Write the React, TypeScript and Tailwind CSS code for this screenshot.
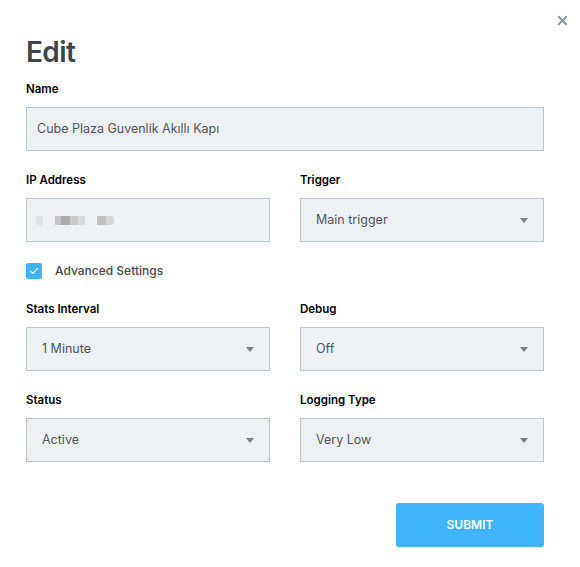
import { X } from "lucide-react";

function Label({ children }: { children: React.ReactNode }) {
  return <div className="mb-[10px] h-4 text-[11.5px] leading-4 font-semibold text-black">{children}</div>;
}

function Select({ value }: { value: string }) {
  return (
    <div className="flex h-[44px] items-center justify-between border border-[#b9c7d0] bg-[#edf1f4] pl-[15px] pr-[15px] text-[12.5px] text-[#50555b]">
      <span>{value}</span>
      <span className="h-0 w-0 border-x-[4.5px] border-t-[5px] border-x-transparent border-t-[#7a7f85]" />
    </div>
  );
}

export default function App() {
  return (
    <div className="relative h-[567px] w-[580px] bg-white pl-[26px] pr-[36px] pt-[38px] font-['Inter',sans-serif]">
      <button className="absolute right-[10px] top-[13px] text-[#8b949b]">
        <X className="h-[15px] w-[15px]" strokeWidth={3} />
      </button>

      <h1 className="text-[28px] leading-[28px] font-semibold tracking-[-0.6px] text-[#3c464e]">Edit</h1>

      <div className="mt-[15px]">
        <Label>Name</Label>
        <div className="flex h-[44px] items-center border border-[#b9c7d0] bg-[#edf1f4] px-[10px] text-[12.5px] text-[#50555b]">
          Cube Plaza Guvenlik Akıllı Kapı
        </div>
      </div>

      <div className="mt-[21px] grid grid-cols-2 gap-x-[30px]">
        <div>
          <Label>IP Address</Label>
          <div className="flex h-[44px] items-center gap-[12px] border border-[#b9c7d0] bg-[#edf1f4] px-[9px]">
            <span className="h-[9px] w-[7px] rounded-l-[3px] bg-[#dfe1e3]" />
            <span className="flex">
              <span className="h-[9px] w-[6px] bg-[#c4c6c8]" />
              <span className="h-[9px] w-[9px] bg-[#a9abad]" />
              <span className="h-[9px] w-[8px] bg-[#c8cacc]" />
              <span className="h-[9px] w-[7px] bg-[#d9dbdd]" />
            </span>
            <span className="flex">
              <span className="h-[9px] w-[9px] bg-[#bdbfc1]" />
              <span className="h-[9px] w-[8px] rounded-r-[3px] bg-[#d6d8da]" />
            </span>
          </div>
        </div>
        <div>
          <Label>Trigger</Label>
          <Select value="Main trigger" />
        </div>
      </div>

      <label className="mt-[20px] flex items-center gap-[13px]">
        <span className="flex h-4 w-4 items-center justify-center rounded-[2px] bg-[#43b2f2]">
          <svg viewBox="0 0 16 16" className="h-4 w-4" fill="none">
            <path d="M4.5 8.2l2.3 2.3 4.7-5" stroke="#fff" strokeWidth="1.1" strokeLinecap="round" strokeLinejoin="round" />
          </svg>
        </span>
        <span className="text-[12px] font-medium text-[#45494e]">Advanced Settings</span>
      </label>

      <div className="mt-[21px] grid grid-cols-2 gap-x-[30px] gap-y-[21px]">
        <div>
          <Label>Stats Interval</Label>
          <Select value="1 Minute" />
        </div>
        <div>
          <Label>Debug</Label>
          <Select value="Off" />
        </div>
        <div>
          <Label>Status</Label>
          <Select value="Active" />
        </div>
        <div>
          <Label>Logging Type</Label>
          <Select value="Very Low" />
        </div>
      </div>

      <div className="mt-[41px] flex justify-end">
        <button className="h-[44px] w-[148px] rounded-[3px] bg-[#40b4ff] text-[12px] font-semibold text-white">
          SUBMIT
        </button>
      </div>
    </div>
  );
}
